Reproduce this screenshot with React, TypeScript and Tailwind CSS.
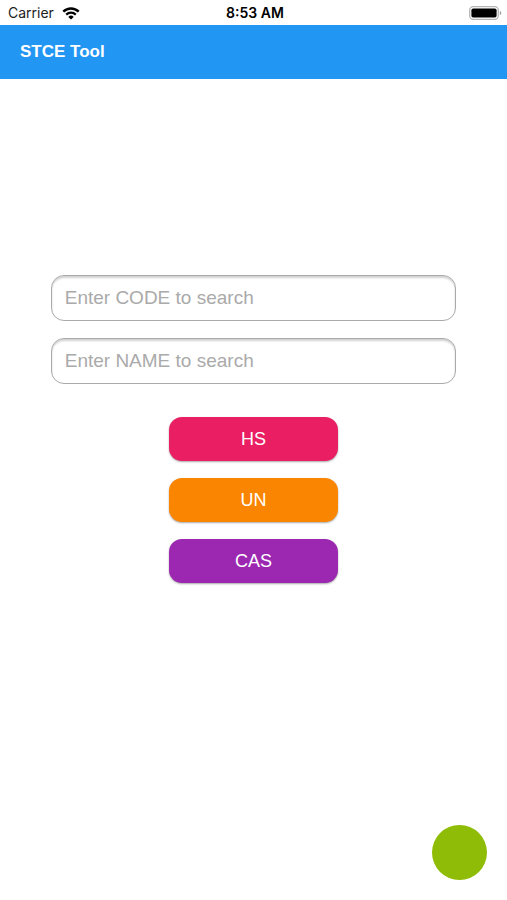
const fields = [
  { id: "code", label: "Enter CODE to search" },
  { id: "name", label: "Enter NAME to search" },
];

const actions = [
  { label: "HS", color: "bg-[#e91e63]" },
  { label: "UN", color: "bg-[#fa8500]" },
  { label: "CAS", color: "bg-[#9c27b0]" },
];

function WifiIcon() {
  return (
    <svg width="18" height="13" viewBox="0 0 18 13" fill="none" stroke="#000" aria-hidden="true">
      <path d="M1.3 4.6a11 11 0 0 1 15.4 0" strokeWidth="2.5" />
      <path d="M4.2 7.6a6.9 6.9 0 0 1 9.6 0" strokeWidth="2.2" />
      <path d="M9 12.6 6.3 9.9a3.8 3.8 0 0 1 5.4 0Z" fill="#000" stroke="none" />
    </svg>
  );
}

function BatteryIcon() {
  return (
    <svg width="33" height="14" viewBox="0 0 33 14" aria-hidden="true">
      <rect x="0.7" y="0.7" width="28.6" height="12.6" rx="3.5" fill="#fff" stroke="#b5b5b5" strokeWidth="1.3" />
      <rect x="2.4" y="2.4" width="25.2" height="9.2" rx="1.8" fill="#000" />
      <path d="M30.8 5v4c1-.3 1.5-1.1 1.5-2s-.5-1.7-1.5-2Z" fill="#a0a0a0" />
    </svg>
  );
}

function StatusBar() {
  return (
    <div className="grid h-[25px] grid-cols-3 items-center pt-px pr-[5px] pl-2 font-['Inter',sans-serif] text-sm text-[#222]">
      <div className="flex items-center gap-2">
        <span>Carrier</span>
        <WifiIcon />
      </div>
      <span className="text-center font-semibold text-black">8:53 AM</span>
      <div className="flex justify-end">
        <BatteryIcon />
      </div>
    </div>
  );
}

export default function App() {
  return (
    <div className="flex min-h-screen flex-col bg-white font-['Liberation_Sans',Arial,sans-serif]">
      <StatusBar />
      <header className="flex h-[54px] items-center bg-[#2196f3] px-5">
        <h1 className="text-[17px] font-bold text-white">STCE Tool</h1>
      </header>
      <main className="flex flex-1 flex-col items-center">
        <form className="my-auto flex w-full flex-col items-center gap-[33px] pb-[122px]" onSubmit={(e) => e.preventDefault()}>
          <div className="flex w-4/5 flex-col gap-[17px]">
            {fields.map((field) => (
              <input
                key={field.id}
                id={field.id}
                type="text"
                aria-label={field.label}
                placeholder={field.label}
                className="h-[46px] w-full rounded-[13px] border border-[#aaa] bg-white px-[13px] text-[19px] text-black shadow-[inset_0_2px_2px_rgba(0,0,0,0.18)] outline-none placeholder:text-[#aaa] placeholder:opacity-100"
              />
            ))}
          </div>
          <div className="flex w-1/3 flex-col gap-[17px]">
            {actions.map((action) => (
              <button
                key={action.label}
                type="button"
                className={`h-11 w-full rounded-[13px] text-lg text-white shadow-[0_1px_2px_rgba(0,0,0,0.35)] ${action.color}`}
              >
                {action.label}
              </button>
            ))}
          </div>
        </form>
      </main>
      <button type="button" aria-label="Add" className="fixed right-5 bottom-5 size-[55px] rounded-full bg-[#8fbc06]" />
    </div>
  );
}
